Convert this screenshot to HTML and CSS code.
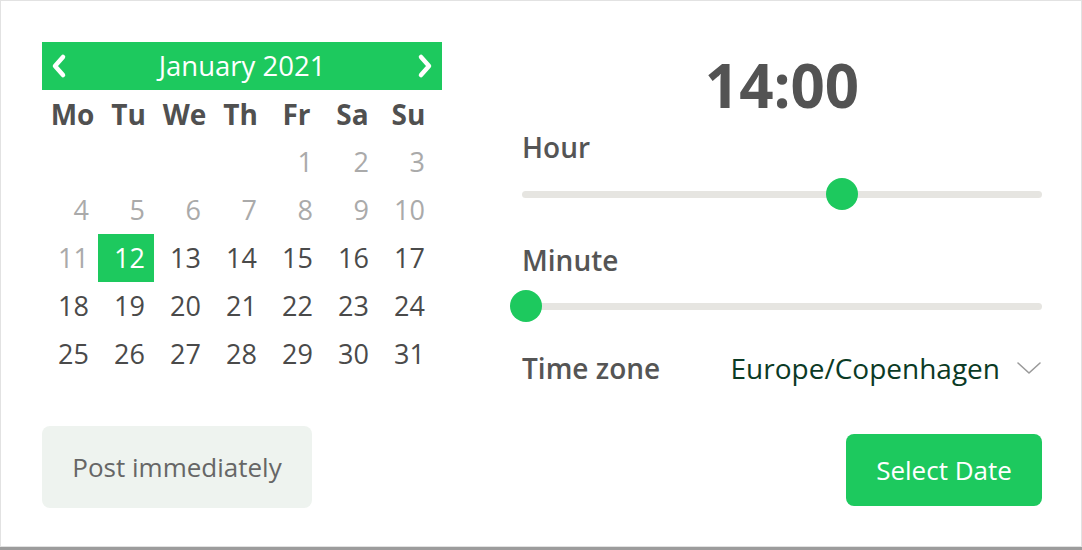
FILE: index.html
```html
<!DOCTYPE html>
<html lang="en">
<head>
<meta charset="utf-8">
<title>Schedule post</title>
<link rel="stylesheet" href="styles.css">
</head>
<body>
<div class="frame">
  <div class="main">
    <section class="calendar">
      <div class="cal-head">
        <button class="nav" aria-label="Previous month">
          <svg width="18" height="26" viewBox="0 0 18 26"><polyline points="13,4 5,13 13,22" fill="none" stroke="#fff" stroke-width="4.5" stroke-linecap="round" stroke-linejoin="round"/></svg>
        </button>
        <span class="month">January 2021</span>
        <button class="nav" aria-label="Next month">
          <svg width="18" height="26" viewBox="0 0 18 26"><polyline points="5,4 13,13 5,22" fill="none" stroke="#fff" stroke-width="4.5" stroke-linecap="round" stroke-linejoin="round"/></svg>
        </button>
      </div>
      <div class="grid">
        <span class="wd">Mo</span><span class="wd">Tu</span><span class="wd">We</span><span class="wd">Th</span><span class="wd">Fr</span><span class="wd">Sa</span><span class="wd">Su</span>
        <span class="d"></span><span class="d"></span><span class="d"></span><span class="d"></span><span class="d past">1</span><span class="d past">2</span><span class="d past">3</span>
        <span class="d past">4</span><span class="d past">5</span><span class="d past">6</span><span class="d past">7</span><span class="d past">8</span><span class="d past">9</span><span class="d past">10</span>
        <span class="d past">11</span><span class="d sel">12</span><span class="d">13</span><span class="d">14</span><span class="d">15</span><span class="d">16</span><span class="d">17</span>
        <span class="d">18</span><span class="d">19</span><span class="d">20</span><span class="d">21</span><span class="d">22</span><span class="d">23</span><span class="d">24</span>
        <span class="d">25</span><span class="d">26</span><span class="d">27</span><span class="d">28</span><span class="d">29</span><span class="d">30</span><span class="d">31</span>
      </div>
    </section>
    <section class="time-panel">
      <div class="time">14:00</div>
      <div class="label label-1">Hour</div>
      <div class="slider"><div class="track"></div><div class="thumb" style="--p:0.617"></div></div>
      <div class="label label-2">Minute</div>
      <div class="slider"><div class="track"></div><div class="thumb" style="--p:0"></div></div>
      <div class="tz-row">
        <span class="label">Time zone</span>
        <span class="tz-select">
          <span class="tz-value">Europe/Copenhagen</span>
          <svg width="26" height="14" viewBox="0 0 26 14"><polyline points="2,2 13,12 24,2" fill="none" stroke="#9a9a9a" stroke-width="1.6" stroke-linecap="round" stroke-linejoin="round"/></svg>
        </span>
      </div>
    </section>
  </div>
  <div class="footer">
    <button class="btn btn-light">Post immediately</button>
    <button class="btn btn-green">Select Date</button>
  </div>
</div>
</body>
</html>
```
FILE: styles.css
```css
html, body {
  margin: 0;
  padding: 0;
}
body {
  width: 1082px;
  height: 550px;
  background: #9c9c9c;
  font-family: "Open Sans", "Noto Sans", sans-serif;
  color: #555555;
  overflow: hidden;
}
.frame {
  box-sizing: border-box;
  width: 1082px;
  height: 547px;
  background: #ffffff;
  border: 1px solid #e2e2e2;
  padding: 41px 39px 0 41px;
}
.main {
  display: flex;
  align-items: flex-start;
}
.calendar {
  width: 400px;
  flex: none;
}
.cal-head {
  height: 48px;
  background: #1dc95e;
  display: flex;
  align-items: center;
  justify-content: space-between;
  padding: 0 8px 0 8px;
}
.nav {
  border: 0;
  background: none;
  padding: 0;
  width: 18px;
  height: 26px;
  display: flex;
}
.month {
  color: #ffffff;
  font-size: 27.5px;
  line-height: 48px;
}
.grid {
  display: grid;
  grid-template-columns: repeat(7, 56px);
  grid-auto-rows: 48px;
}
.wd {
  font-weight: 700;
  font-size: 28px;
  line-height: 48px;
  text-align: center;
  padding-left: 5px;
  color: #505050;
}
.d {
  font-size: 27px;
  line-height: 48px;
  text-align: right;
  padding-right: 9px;
  color: #4a4a4a;
}
.d.past {
  color: #aaaaaa;
}
.d.sel {
  background: #1dc95e;
  color: #ffffff;
}
.time-panel {
  flex: 1;
  margin-left: 80px;
  display: flex;
  flex-direction: column;
}
.time {
  font-size: 60px;
  font-weight: 700;
  line-height: 86px;
  text-align: center;
  color: #535353;
}
.label {
  font-size: 28px;
  font-weight: 600;
  line-height: 42px;
  color: #555555;
}
.label-1 {
  margin-top: -2px;
  margin-bottom: 2px;
}
.label-2 {
  margin-top: 21px;
  margin-bottom: 1px;
}
.slider {
  position: relative;
  height: 48px;
  display: flex;
  align-items: center;
}
.track {
  width: 100%;
  height: 7px;
  border-radius: 4px;
  background: #e6e5e1;
}
.thumb {
  position: absolute;
  top: 8px;
  left: calc(4px + var(--p) * (100% - 8px) - 16px);
  width: 32px;
  height: 32px;
  border-radius: 50%;
  background: #1dc95e;
}
.tz-row {
  margin-top: 17px;
  display: flex;
  align-items: center;
  justify-content: space-between;
}
.tz-select {
  display: flex;
  align-items: center;
  gap: 16px;
}
.tz-value {
  font-size: 28px;
  color: #0b3a25;
  line-height: 42px;
}
.footer {
  margin-top: 37px;
  display: flex;
  justify-content: space-between;
  align-items: flex-end;
}
.btn {
  font-family: "Open Sans", "Noto Sans", sans-serif;
  font-size: 26px;
  border: 0;
  border-radius: 8px;
  padding: 0;
}
.btn-light {
  width: 270px;
  height: 82px;
  background: #eef3ef;
  color: #666666;
}
.btn-green {
  width: 196px;
  height: 72px;
  margin-bottom: 2px;
  background: #1dc95e;
  color: #ffffff;
}
```
